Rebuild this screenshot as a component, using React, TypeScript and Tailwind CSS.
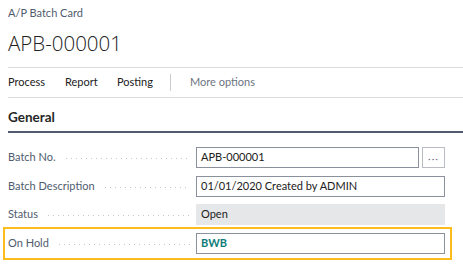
import React from 'react';

const font = { fontFamily: 'Lato, "Open Sans", "Noto Sans", sans-serif' };

const Leader: React.FC = () => (
  <span className="ml-[10px] mr-[6px] mt-[2px] h-px flex-1 bg-[linear-gradient(to_right,#c3c6cb_1px,transparent_1px)] bg-[length:5px_1px] bg-repeat-x" />
);

interface FieldRowProps {
  label: string;
  children: React.ReactNode;
  className?: string;
}

const FieldRow: React.FC<FieldRowProps> = ({ label, children, className = '' }) => (
  <div className={`flex h-[21px] items-center ${className}`}>
    <div className="flex w-[188px] items-center">
      <span className="text-[11px] text-[#505c6d]">{label}</span>
      <Leader />
    </div>
    <div className="flex flex-1 items-center">{children}</div>
  </div>
);

const App: React.FC = () => {
  return (
    <div className="h-[270px] w-[463px] overflow-hidden bg-white text-[#212121]" style={font}>
      <div className="pl-2">
        <div className="pt-[5px] text-[11px] leading-4 text-[#505c6d]">A/P Batch Card</div>
        <h1
          className="mt-[8px] text-[20.5px] font-light leading-[28px] text-[#212121]"
          style={{ fontFamily: '"Open Sans", "Noto Sans", sans-serif' }}
        >
          APB-000001
        </h1>

        {/* action bar */}
        <div className="mt-[10px] flex h-[31px] items-center border-y border-[#dadce0] text-[11px]">
          <span className="w-[57px]">Process</span>
          <span className="w-[52px]">Report</span>
          <span className="w-[53px]">Posting</span>
          <span className="h-[17px] w-px bg-[#c8cbd0]" />
          <span className="ml-[19px] text-[#6b7480]">More options</span>
        </div>

        <div className="flex h-[35px] items-center border-b-2 border-[#505c6d] pt-[6px] text-[13.5px] font-bold text-[#262626]">
          General
        </div>
      </div>

      <div className="ml-2 w-[437px] text-[11px]">
        <FieldRow label="Batch No." className="mt-[14px]">
          <div className="flex h-[21px] flex-1 items-center border border-[#8a919c] px-[4px]">APB-000001</div>
          <button className="ml-[3px] flex h-[21px] w-[23px] items-center justify-center border border-[#b9bdc3] text-[10px] leading-none tracking-[1px] text-[#6b7480]">
            ···
          </button>
        </FieldRow>

        <FieldRow label="Batch Description" className="mt-[8px]">
          <div className="flex h-[21px] flex-1 items-center border border-[#8a919c] px-[4px]">01/01/2020 Created by ADMIN</div>
        </FieldRow>

        <FieldRow label="Status" className="mt-[7px]">
          <div className="flex h-[21px] flex-1 items-center bg-[#e6e7e9] px-[5px]">Open</div>
        </FieldRow>

        <div className="-ml-[5px] -mr-[7px] mt-[2px] border-2 border-[#fbbc1c] py-[4px] pl-[3px] pr-[5px]">
          <FieldRow label="On Hold">
            <div className="flex h-[21px] flex-1 items-center border border-[#8a919c] px-[4px] font-bold text-[#0f7d7b]">BWB</div>
          </FieldRow>
        </div>
      </div>
    </div>
  );
};

export default App;
